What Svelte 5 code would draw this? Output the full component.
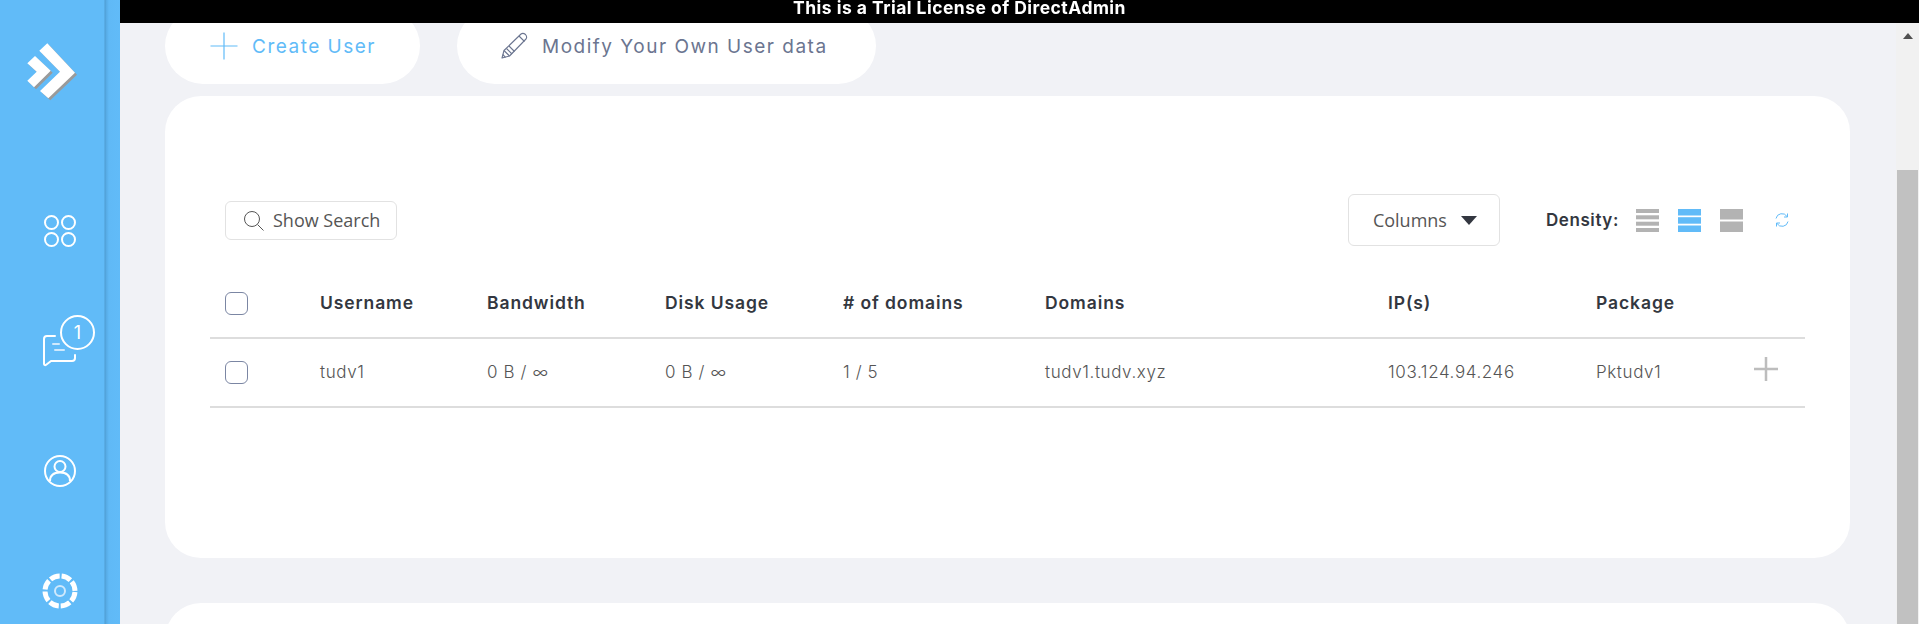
<script lang="ts">
  const columns = [
    { label: 'Username', value: 'tudv1' },
    { label: 'Bandwidth', value: '0 B / ∞' },
    { label: 'Disk Usage', value: '0 B / ∞' },
    { label: '# of domains', value: '1 / 5' },
    { label: 'Domains', value: 'tudv1.tudv.xyz' },
    { label: 'IP(s)', value: '103.124.94.246' },
    { label: 'Package', value: 'Pktudv1' }
  ];
</script>

<div class="banner">This is a Trial License of DirectAdmin</div>

<div class="page">
  <aside class="sidebar">
    <div class="logo">
      <svg width="80" height="80" viewBox="20 30 80 80">
        <g fill="#9a9a9a" transform="translate(2 2)">
          <path d="M47.3 43.3 75 72.7 48.3 98.3 40 91 60 71.7 39.3 50.7Z" />
          <path d="M35 56 50.7 70.7 34 87.3 27.3 80.7 36.7 71.7 27.3 63.3Z" />
        </g>
        <g fill="#fff">
          <path d="M47.3 43.3 75 72.7 48.3 98.3 40 91 60 71.7 39.3 50.7Z" />
          <path d="M35 56 50.7 70.7 34 87.3 27.3 80.7 36.7 71.7 27.3 63.3Z" />
        </g>
      </svg>
    </div>

    <div class="nav-item">
      <svg width="36" height="36" viewBox="0 0 36 36" fill="none" stroke="#fff" stroke-width="2">
        <circle cx="9.5" cy="9.5" r="6.5" />
        <circle cx="26.5" cy="9.5" r="6.5" />
        <circle cx="9.5" cy="26.5" r="6.5" />
        <circle cx="26.5" cy="26.5" r="6.5" />
      </svg>
    </div>

    <div class="nav-item">
      <div class="chat">
        <svg width="36" height="36" viewBox="0 0 36 36" fill="none" stroke="#fff" stroke-width="2" stroke-linecap="round" stroke-linejoin="round">
          <path d="M13 3H5Q2 3 2 6V31Q2.500 33 4.500 31.500L9 28H30Q33 28 33 25V22" />
          <path d="M11 11H17M13 17H22" stroke="#cfe9fc" />
        </svg>
        <span class="badge">1</span>
      </div>
    </div>

    <div class="nav-item">
      <svg width="36" height="36" viewBox="0 0 36 36" fill="none" stroke="#fff" stroke-width="2">
        <circle cx="18" cy="18" r="15" />
        <circle cx="18" cy="13.500" r="5.500" />
        <path d="M8 28C8 22 12 19.500 18 19.500S28 22 28 28" />
      </svg>
    </div>

    <div class="nav-item">
      <svg width="38" height="38" viewBox="0 0 38 38" fill="none">
        <circle cx="19" cy="19" r="15" stroke="#fff" stroke-width="5" stroke-dasharray="9.800 2" transform="rotate(4 19 19)" />
        <circle cx="19" cy="19" r="5" stroke="#cfe9fc" stroke-width="2" />
      </svg>
    </div>
  </aside>

  <main class="main">
    <div class="actions">
      <button class="pill create">
        <svg width="28" height="28" viewBox="0 0 28 28" stroke="#61bbf8" stroke-width="1.200">
          <path d="M14 .5V27.500M.5 14H27.500" />
        </svg>
        Create User
      </button>
      <button class="pill modify">
        <svg width="28" height="28" viewBox="0 0 28 28" fill="none" stroke="#6b7590" stroke-width="1.100" stroke-linejoin="round">
          <path d="M2 26 4 18.500 21 2Q23 .5 25.500 2.500 27.500 5 26 7L9.500 24Z" />
          <path d="M4 18.500 9.500 24M6.500 16.500 12 22M9 14 14.500 19.500M19 4 24.500 9.500M2.800 22.500 5.500 25.300" />
        </svg>
        Modify Your Own User data
      </button>
    </div>

    <section class="card table-card">
      <div class="toolbar">
        <button class="search-btn">
          <svg width="21" height="21" viewBox="0 0 21 21" fill="none" stroke="#555" stroke-width="1">
            <circle cx="9" cy="9" r="7.500" />
            <path d="M14.500 14.500 20.500 20.500" />
          </svg>
          Show Search
        </button>

        <button class="columns-btn">
          Columns
          <svg width="16" height="9" viewBox="0 0 16 9"><path d="M0 0H16L8 9Z" fill="#333740" /></svg>
        </button>

        <span class="density-label">Density:</span>
        <div class="density">
          <svg width="23" height="23" viewBox="0 0 23 23" fill="#b3b3b3">
            <rect y="0" width="23" height="4" />
            <rect y="6.300" width="23" height="4" />
            <rect y="12.700" width="23" height="4" />
            <rect y="19" width="23" height="4" />
          </svg>
          <svg width="23" height="23" viewBox="0 0 23 23" fill="#61bbf8">
            <rect y="0" width="23" height="6.500" />
            <rect y="8.200" width="23" height="6.500" />
            <rect y="16.500" width="23" height="6.500" />
          </svg>
          <svg width="23" height="23" viewBox="0 0 23 23" fill="#b3b3b3">
            <rect y="0" width="23" height="10.500" />
            <rect y="12.500" width="23" height="10.500" />
          </svg>
        </div>
        <svg class="refresh" width="16" height="16" viewBox="0 0 16 16" fill="none" stroke="#61bbf8" stroke-width="1">
          <path d="M2 6.500A6 6 0 0 1 13 4.500M14 9.500A6 6 0 0 1 3 11.500" />
          <path d="M13.500 1.500V5H10M2.500 14.500V11H6" />
        </svg>
      </div>

      <div class="row head">
        <span class="cell-check"><span class="check"></span></span>
        {#each columns as col}
          <span class="cell">{col.label}</span>
        {/each}
      </div>

      <div class="row body">
        <span class="cell-check"><span class="check"></span></span>
        {#each columns as col}
          <span class="cell">{col.value}</span>
        {/each}
        <svg class="expand" width="24" height="24" viewBox="0 0 24 24" stroke="#bdbdbd" stroke-width="2.500">
          <path d="M12 0V24M0 12H24" />
        </svg>
      </div>
    </section>

    <section class="card next-card"></section>
  </main>

  <div class="scrollbar">
    <div class="arrow"></div>
    <div class="thumb"></div>
  </div>
</div>

<style>
  :global(body) {
    margin: 0;
    background: #f1f2f6;
  }

  button {
    font: inherit;
    cursor: pointer;
  }

  .banner {
    position: fixed;
    top: 0;
    left: 0;
    right: 0;
    z-index: 5;
    height: 23px;
    background: #000;
    color: #fff;
    font-family: Inter, "Liberation Sans", sans-serif;
    font-size: 17.500px;
    font-weight: 700;
    letter-spacing: 0.470px;
    line-height: 15px;
    text-align: center;
  }

  .page {
    display: flex;
    height: 624px;
    overflow: hidden;
    font-family: Inter, "Liberation Sans", sans-serif;
  }

  .sidebar {
    position: relative;
    z-index: 10;
    flex: 0 0 120px;
    width: 120px;
    height: 624px;
    box-sizing: border-box;
    padding-right: 15px;
    background: linear-gradient(90deg, #61bbf8 104px, #4f9dd2 105px, #56aae4 106px, #60b9f6 109px, #61bbf8 120px);
  }

  .logo {
    height: 171px;
    padding: 30px 0 0 20px;
    box-sizing: border-box;
  }

  .nav-item {
    display: flex;
    align-items: center;
    justify-content: center;
    width: 120px;
    height: 120px;
  }

  .chat {
    position: relative;
    display: flex;
  }

  .badge {
    position: absolute;
    top: -18px;
    left: 18px;
    display: flex;
    align-items: center;
    justify-content: center;
    width: 31px;
    height: 31px;
    border: 2.500px solid #fff;
    border-radius: 50%;
    background: #61bbf8;
    color: #fff;
    font-size: 18px;
  }

  .main {
    flex: 1;
    min-width: 0;
    padding: 8px 46px 0 45px;
    background: #f1f2f6;
  }

  .actions {
    display: flex;
    gap: 37px;
    height: 76px;
  }

  .pill {
    display: flex;
    align-items: center;
    height: 76px;
    gap: 14px;
    border: 0;
    border-radius: 38px;
    background: #fff;
    font-size: 19px;
    letter-spacing: 1.500px;
  }

  .create {
    width: 255px;
    padding: 0 0 0 45px;
    color: #61bbf8;
  }

  .modify {
    width: 419px;
    padding: 0 0 0 43px;
    color: #6b7590;
  }

  .card {
    background: #fff;
    border-radius: 36px;
  }

  .table-card {
    height: 462px;
    margin-top: 12px;
    padding: 98px 45px 0;
    box-sizing: border-box;
  }

  .next-card {
    height: 300px;
    margin-top: 45px;
  }

  .toolbar {
    display: flex;
    align-items: center;
    height: 52px;
    margin-bottom: 24px;
    padding-left: 15px;
  }

  .search-btn {
    display: flex;
    align-items: center;
    gap: 9px;
    width: 172px;
    height: 39px;
    padding: 0 0 0 17px;
    box-sizing: border-box;
    border: 1px solid #e2e2e2;
    border-radius: 6px;
    background: #fff;
    color: #555;
    font-family: "Open Sans", sans-serif;
    font-size: 18px;
  }

  .columns-btn {
    display: flex;
    align-items: center;
    gap: 14px;
    width: 152px;
    height: 52px;
    margin-left: auto;
    padding: 0 0 0 24px;
    box-sizing: border-box;
    border: 1px solid #e2e2e2;
    border-radius: 6px;
    background: #fff;
    color: #555;
    font-family: "Open Sans", sans-serif;
    font-size: 18px;
  }

  .density-label {
    margin-left: 46px;
    color: #333740;
    font-size: 17px;
    font-weight: 600;
    letter-spacing: 0.600px;
  }

  .density {
    display: flex;
    gap: 19px;
    margin-left: 17px;
  }

  .refresh {
    margin: 0 15px 0 31px;
  }

  .row {
    position: relative;
    display: grid;
    grid-template-columns: 110px 167px 178px 178px 202px 343px 208px 1fr;
    align-items: center;
    box-sizing: border-box;
    border-bottom: 2px solid #ddd;
  }

  .cell {
    padding-bottom: 2px;
  }

  .head {
    height: 69px;
    color: #333740;
    font-size: 17.500px;
    font-weight: 600;
    letter-spacing: 0.900px;
  }

  .body {
    height: 69px;
    color: #555;
    font-size: 17px;
    font-weight: 300;
    letter-spacing: 0.600px;
  }

  .cell-check {
    display: flex;
    padding-left: 15px;
  }

  .check {
    width: 23px;
    height: 23px;
    box-sizing: border-box;
    border: 1px solid #7b86a3;
    border-radius: 6px;
  }

  .expand {
    position: absolute;
    left: 1544px;
    top: 18px;
  }

  .scrollbar {
    display: flex;
    flex-direction: column;
    flex: 0 0 23px;
    width: 23px;
    height: 624px;
    box-sizing: border-box;
    padding: 33px 1px 0 1px;
    background: #f1f1f1;
  }

  .arrow {
    align-self: center;
    width: 0;
    height: 0;
    border-left: 5.500px solid transparent;
    border-right: 5.500px solid transparent;
    border-bottom: 6px solid #505050;
  }

  .thumb {
    flex: 1;
    margin-top: 131px;
    background: #c1c1c1;
  }
</style>
